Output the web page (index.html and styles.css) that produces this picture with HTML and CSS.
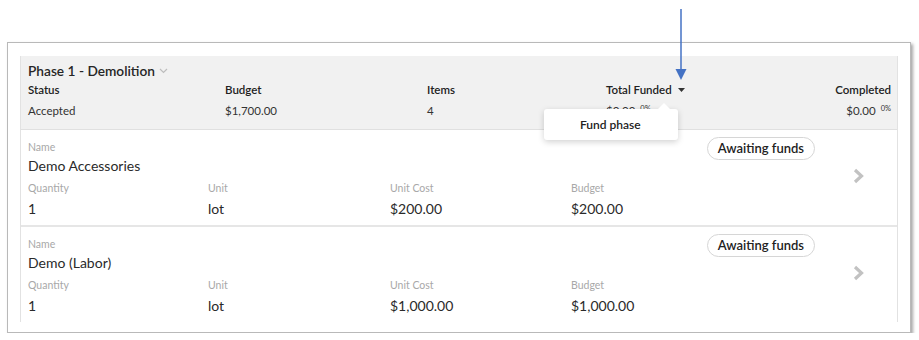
FILE: index.html
```html
<!DOCTYPE html>
<html>
<head>
<meta charset="utf-8">
<link rel="stylesheet" href="styles.css">
</head>
<body>
<div class="frame">
  <div class="panel">
    <div class="phase-head">
      <div class="title">Phase 1 - Demolition
        <svg class="title-chev" width="9" height="6" viewBox="0 0 9 6"><polyline points="1,1 4.5,4.5 8,1" fill="none" stroke="#bdbdbd" stroke-width="1.2"/></svg>
      </div>
      <div class="stats">
        <div class="stat-label">Status</div>
        <div class="stat-label">Budget</div>
        <div class="stat-label">Items</div>
        <div class="stat-label">Total Funded <svg class="caret" width="7" height="4" viewBox="0 0 7 4"><polygon points="0,0 7,0 3.5,4" fill="#333"/></svg></div>
        <div class="stat-label right">Completed</div>
        <div class="stat-value">Accepted</div>
        <div class="stat-value">$1,700.00</div>
        <div class="stat-value">4</div>
        <div class="stat-value">$0.00 <sup>0%</sup></div>
        <div class="stat-value right">$0.00 <sup>0%</sup></div>
      </div>
    </div>

    <div class="item">
      <div class="item-main">
        <div class="lbl">Name</div>
        <div class="val name">Demo Accessories</div>
        <div class="fields">
          <div><div class="lbl">Quantity</div><div class="val">1</div></div>
          <div><div class="lbl">Unit</div><div class="val">lot</div></div>
          <div><div class="lbl">Unit Cost</div><div class="val">$200.00</div></div>
          <div><div class="lbl">Budget</div><div class="val">$200.00</div></div>
        </div>
      </div>
      <div class="item-status"><span class="pill">Awaiting funds</span></div>
      <svg class="chev" width="11" height="16" viewBox="0 0 11 16"><polyline points="2,2 8.5,8 2,14" fill="none" stroke="#c2c2c2" stroke-width="3.2"/></svg>
    </div>

    <div class="item">
      <div class="item-main">
        <div class="lbl">Name</div>
        <div class="val name">Demo (Labor)</div>
        <div class="fields">
          <div><div class="lbl">Quantity</div><div class="val">1</div></div>
          <div><div class="lbl">Unit</div><div class="val">lot</div></div>
          <div><div class="lbl">Unit Cost</div><div class="val">$1,000.00</div></div>
          <div><div class="lbl">Budget</div><div class="val">$1,000.00</div></div>
        </div>
      </div>
      <div class="item-status"><span class="pill">Awaiting funds</span></div>
      <svg class="chev" width="11" height="16" viewBox="0 0 11 16"><polyline points="2,2 8.5,8 2,14" fill="none" stroke="#c2c2c2" stroke-width="3.2"/></svg>
    </div>

    <div class="menu">Fund phase</div>
  </div>
</div>
<svg class="pointer" width="12" height="72" viewBox="0 0 12 72"><line x1="6" y1="0" x2="6" y2="62" stroke="#4472c4" stroke-width="1.5"/><polygon points="0.5,60 11.5,60 6,71" fill="#4472c4"/></svg>
</body>
</html>
```
FILE: styles.css
```css
* { box-sizing: border-box; }
body {
  margin: 0;
  background: #fff;
  font-family: Lato, "Open Sans", sans-serif;
  color: #222;
}
.frame {
  margin: 42px 0 0 7px;
  width: 904px;
  height: 291px;
  border: 1px solid #b9b9b9;
  box-shadow: 2px 2px 3px rgba(0,0,0,0.35);
  background: #fff;
  padding: 13px 0 0 12px;
}
.panel {
  position: relative;
  width: 878px;
  height: 266px;
  overflow: hidden;
  border-left: 1px solid #e2e2e2;
  border-right: 1px solid #e2e2e2;
}
.phase-head {
  background: #f1f1f1;
  padding: 6px 6px 10px 7px;
  border-bottom: 1px solid #e0e0e0;
}
.title {
  font-size: 13.7px;
  font-weight: 600;
  line-height: 18px;
  color: #262626;
}
.title-chev { margin-left: 1px; vertical-align: 2px; }
.stats {
  display: grid;
  grid-template-columns: 197px 202px 179px 1fr 120px;
  grid-template-rows: 16px 16px;
  row-gap: 5px;
  margin-top: 2px;
  font-size: 11.5px;
  line-height: 16px;
}
.stat-label { font-weight: 600; color: #222; }
.stat-value { color: #333; }
.right { text-align: right; }
.stat-value sup { font-size: 7.5px; vertical-align: 4px; line-height: 0; margin-left: 2px; }
.caret { margin-left: 4px; vertical-align: 2px; }
.item {
  display: flex;
  align-items: flex-start;
  padding: 10px 33px 6px 7px;
  border-bottom: 2px solid #e6e6e6;
  height: 97px;
}
.item-main { flex: 1; }
.lbl {
  font-size: 10.5px;
  line-height: 14px;
  color: #a8a8a8;
}
.val {
  font-size: 14px;
  line-height: 20px;
  color: #2a2a2a;
  margin-top: 2px;
}
.val.name { margin-bottom: 5px; }
.fields {
  display: grid;
  grid-template-columns: 180px 182px 181px 1fr;
}
.fields .val { margin-top: 4px; }
.item-status { margin-top: -3px; }
.pill {
  display: inline-block;
  border: 1px solid #d6d6d6;
  border-radius: 12px;
  padding: 0 10px;
  height: 23px;
  line-height: 21px;
  font-size: 13px;
  font-weight: 600;
  color: #222;
}
.chev { margin-left: 38px; align-self: center; margin-top: -8px; }
.menu {
  position: absolute;
  left: 523px;
  top: 53px;
  width: 134px;
  height: 31px;
  background: #fff;
  border-radius: 3px;
  box-shadow: 0 2px 6px rgba(0,0,0,0.18);
  font-size: 12px;
  font-weight: 600;
  line-height: 31px;
  padding-left: 36px;
  color: #222;
}
.menu::before {
  content: "";
  position: absolute;
  top: -6px;
  right: 8px;
  border-left: 6px solid transparent;
  border-right: 6px solid transparent;
  border-bottom: 6px solid #fff;
}
.pointer {
  position: absolute;
  left: 675px;
  top: 9px;
}
```
